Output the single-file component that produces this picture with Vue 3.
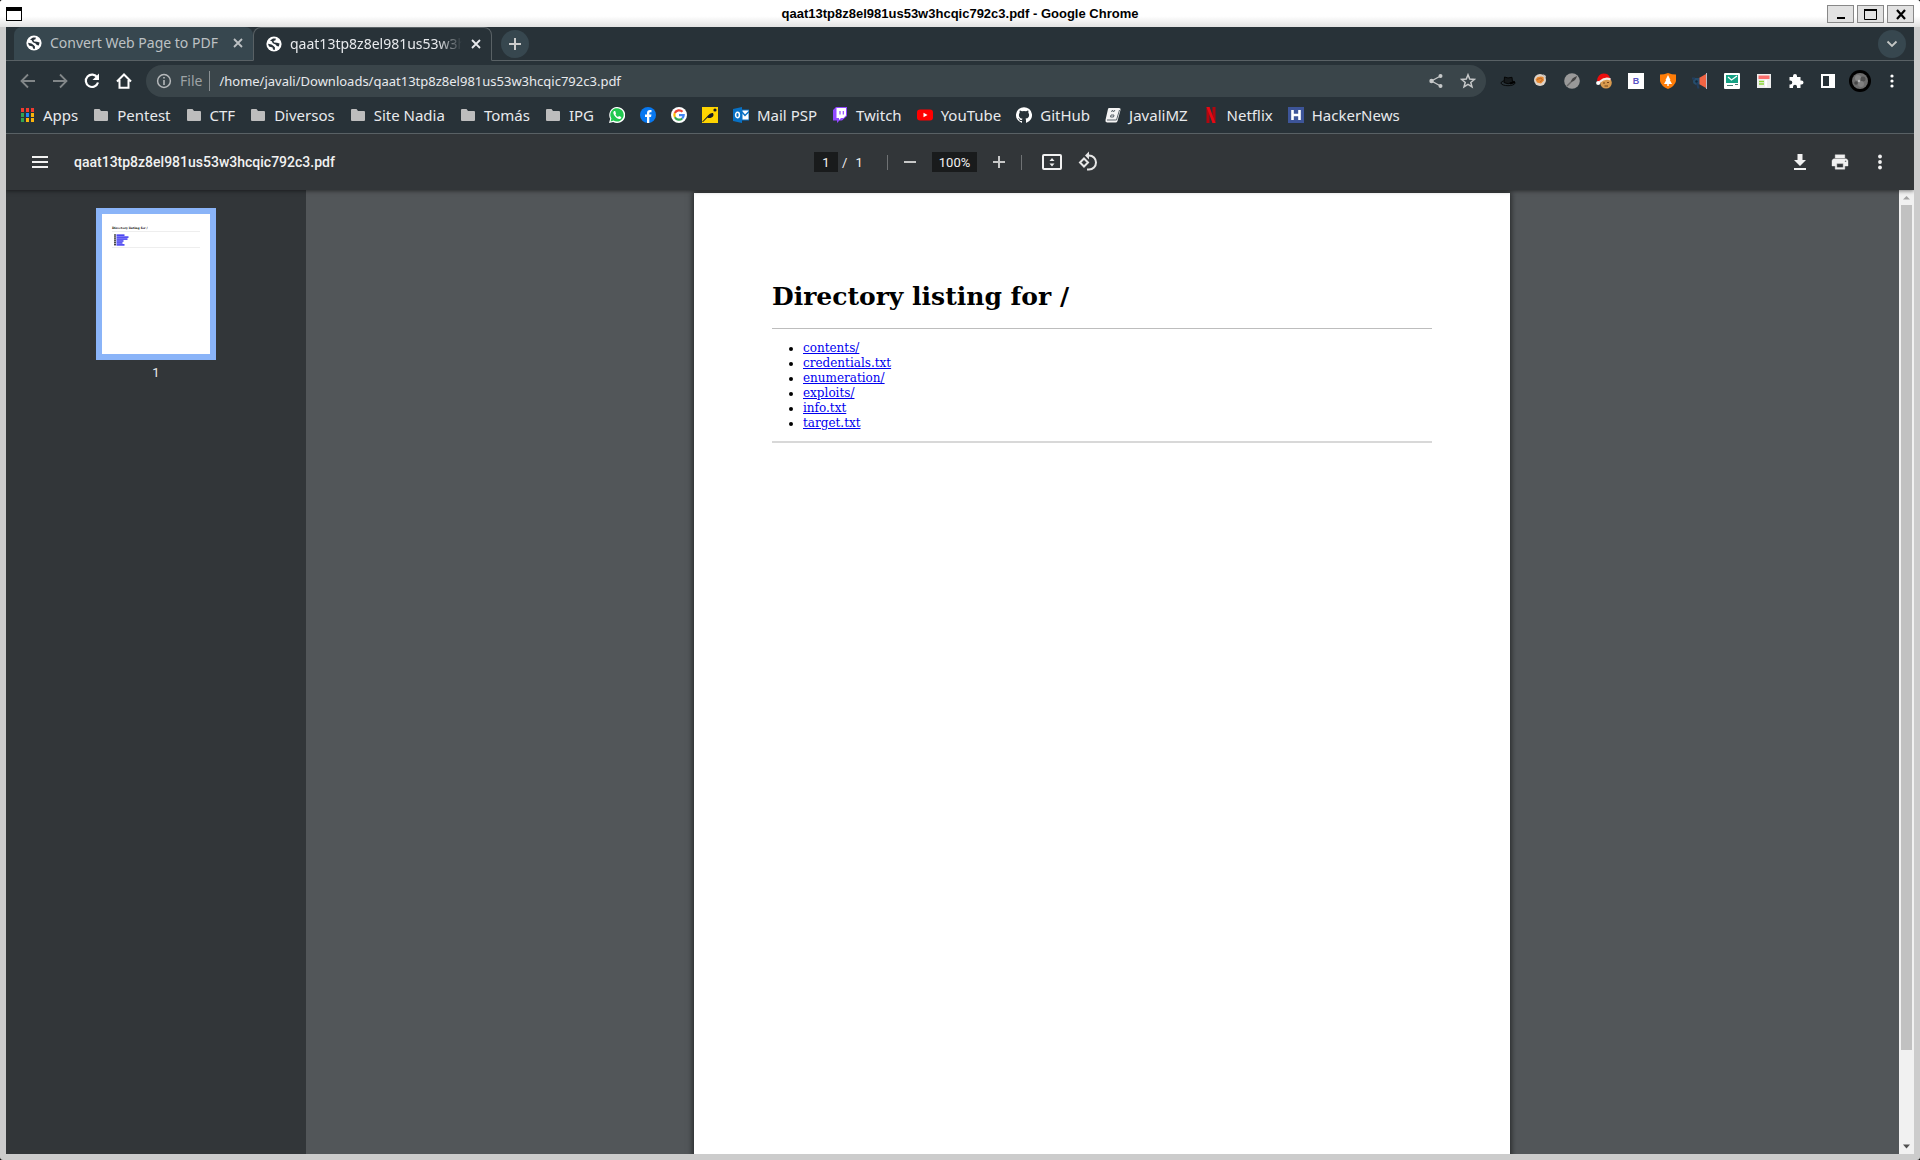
<script setup>
import { ref } from 'vue'

const fileName = 'qaat13tp8z8el981us53w3hcqic792c3.pdf'
const address = ref('/home/javali/Downloads/' + fileName)
const pageNumber = ref('1')
const zoomLevel = ref('100%')

const tabs = [
  { title: 'Convert Web Page to PDF', active: false },
  { title: fileName, active: true },
]

const bookmarks = [
  { icon: 'apps', label: 'Apps' },
  { icon: 'folder', label: 'Pentest' },
  { icon: 'folder', label: 'CTF' },
  { icon: 'folder', label: 'Diversos' },
  { icon: 'folder', label: 'Site Nadia' },
  { icon: 'folder', label: 'Tomás' },
  { icon: 'folder', label: 'IPG' },
  { icon: 'whatsapp', name: 'WhatsApp' },
  { icon: 'facebook', name: 'Facebook' },
  { icon: 'google', name: 'Google' },
  { icon: 'spoon', name: 'Recipes' },
  { icon: 'outlook', label: 'Mail PSP' },
  { icon: 'twitch', label: 'Twitch' },
  { icon: 'youtube', label: 'YouTube' },
  { icon: 'github', label: 'GitHub' },
  { icon: 'book', label: 'JavaliMZ' },
  { icon: 'netflix', label: 'Netflix' },
  { icon: 'hacker', label: 'HackerNews' },
]

const extensions = ['hat', 'fox', 'wrench', 'santa', 'letter', 'shield', 'megaphone', 'mail', 'notes', 'puzzle', 'panel']

const entries = ['contents/', 'credentials.txt', 'enumeration/', 'exploits/', 'info.txt', 'target.txt']
const thumbRows = [8, 12, 11, 7, 6, 8]
</script>

<template>
  <div class="window">
    <header class="titlebar">
      <svg class="app-icon" width="16" height="14" viewBox="0 0 16 14" aria-hidden="true">
        <path d="M0 0H16V14H0Z" fill="#000" /><path d="M1 4H15V13H1Z" fill="#fff" />
      </svg>
      <h1 class="window-title">{{ fileName }} - Google Chrome</h1>
      <div class="window-buttons">
        <button type="button" aria-label="Minimize"><svg width="14" height="12" viewBox="0 0 14 12"><path d="M3 10H11" stroke="#000" stroke-width="2" /></svg></button>
        <button type="button" aria-label="Maximize"><svg width="14" height="12" viewBox="0 0 14 12"><path d="M.5 1V11.500H12.500V1" stroke="#000" fill="none" /><path d="M0 2H13" stroke="#000" stroke-width="2" /></svg></button>
        <button type="button" aria-label="Close"><svg width="14" height="12" viewBox="0 0 14 12"><path d="M3 2L11 11M11 2L3 11" stroke="#000" stroke-width="2.200" /></svg></button>
      </div>
    </header>

    <div class="browser">
      <nav class="tabstrip" aria-label="Tabs">
        <div v-for="tab in tabs" :key="tab.title" class="tab" :class="{ active: tab.active }">
          <svg class="globe" width="16" height="16" viewBox="0 0 16 16" aria-hidden="true">
            <circle cx="8" cy="8" r="7.600" fill="#fff" />
            <path d="M4 4.500L7 2.600H9.800L9.500 4.200L7.500 5L8.200 6.600L11 6.800L13.600 7.500L12.800 10.500L10.800 10L9.600 8.400L6.800 7.200L5.800 5.200Z" fill="#28323a" />
            <path d="M2 7.800L5.500 8.600L7.600 10L9 11.600L8.800 14L7 13.400L6.600 11.600L3 10.600Z" fill="#28323a" />
          </svg>
          <span class="tab-title">{{ tab.title }}</span>
          <button type="button" class="tab-close" aria-label="Close tab">
            <svg width="16" height="16" viewBox="0 0 16 16"><path d="M4 4L12 12M12 4L4 12" stroke="currentColor" stroke-width="1.800" /></svg>
          </button>
        </div>
        <button type="button" class="round new-tab" aria-label="New tab">
          <svg width="16" height="16" viewBox="0 0 16 16"><path d="M8 2V14M2 8H14" stroke="#ccc" stroke-width="2" /></svg>
        </button>
        <span class="strip-fill"></span>
        <button type="button" class="round tab-search" aria-label="Search tabs">
          <svg width="16" height="16" viewBox="0 0 16 16"><path d="M3.500 5.500L8 10L12.500 5.500" stroke="#c4c7c5" stroke-width="1.800" fill="none" /></svg>
        </button>
      </nav>

      <div class="toolbar">
        <button type="button" class="tool" aria-label="Back"><svg width="16" height="16" viewBox="0 0 16 16"><path d="M15 8H2M8 1.500L1.500 8L8 14.500" stroke="#818688" stroke-width="1.800" fill="none" /></svg></button>
        <button type="button" class="tool" aria-label="Forward"><svg width="16" height="16" viewBox="0 0 16 16"><path d="M1 8H14M8 1.500L14.500 8L8 14.500" stroke="#818688" stroke-width="1.800" fill="none" /></svg></button>
        <button type="button" class="tool" aria-label="Reload"><svg width="16" height="16" viewBox="0 0 16 16"><path d="M13.300 4.500A6.200 6.200 0 1 0 14 9.500" stroke="#fff" stroke-width="2.200" fill="none" /><path d="M15 .5V7H8.500Z" fill="#fff" /></svg></button>
        <button type="button" class="tool" aria-label="Home"><svg width="16" height="16" viewBox="0 0 16 16"><path d="M1 8.500L8 1.500L15 8.500M3.500 7V14.800H12.500V7" stroke="#fff" stroke-width="2" fill="none" /></svg></button>
        <form class="omnibox" @submit.prevent>
          <svg width="16" height="16" viewBox="0 0 16 16" aria-hidden="true"><circle cx="8" cy="8" r="6.400" stroke="#b5b8ba" stroke-width="1.500" fill="none" /><path d="M8 4V5.600M8 7V12" stroke="#b5b8ba" stroke-width="1.600" /></svg>
          <label class="scheme" for="address">File</label>
          <input id="address" v-model="address" class="address" type="text" spellcheck="false">
          <button type="button" class="tool" aria-label="Share"><svg width="16" height="16" viewBox="0 0 16 16"><path d="M12.500 3L3.500 8L12.500 13" stroke="#c6c8c9" stroke-width="1.300" fill="none" /><g fill="#c6c8c9"><circle cx="12.500" cy="3" r="2" /><circle cx="3.500" cy="8" r="2.200" /><circle cx="12.500" cy="13" r="2" /></g></svg></button>
          <button type="button" class="tool" aria-label="Bookmark"><svg width="16" height="16" viewBox="0 0 16 16"><path d="M8 1.800L9.700 6.100L14.400 6.400L10.800 9.400L12 13.900L8 11.400L4 13.900L5.200 9.400L1.600 6.400L6.300 6.100Z" stroke="#c6c8c9" stroke-width="1.500" fill="none" /></svg></button>
        </form>
        <div class="extensions">
          <button v-for="name in extensions" :key="name" type="button" class="tool" :aria-label="name">
            <svg width="16" height="16" viewBox="0 0 16 16">
              <g v-if="name === 'hat'"><ellipse cx="8" cy="10" rx="7" ry="2.700" stroke="#080a0b" fill="none" /><path d="M4 9.500L4.500 4L8 5L12 4.300L12.500 9.500Q8 12 4 9.500Z" fill="#15191b" stroke="#050606" /><path d="M10 10.500L15 9" stroke="#000" stroke-width="2" /></g>
              <g v-else-if="name === 'fox'"><circle cx="8" cy="7" r="6" fill="#ded3c8" /><path d="M3.500 6.500L5.500 4L9 3.500L11.500 4L12 7.500L9 10.500L5 9.500Z" fill="#e98a32" /><path d="M5 6.500L9 5L10.500 7L8 9" stroke="#b8682a" fill="none" /><path d="M11 1L14 3L13 6" fill="#cfc9c4" /></g>
              <g v-else-if="name === 'wrench'"><circle cx="8" cy="8" r="7.800" fill="#999" /><path d="M3 13L8 8" stroke="#666" stroke-width="1.500" /><path d="M7 9Q7 5 13 3Q12 8 7 9Z" fill="#444" /></g>
              <g v-else-if="name === 'santa'"><circle cx="10" cy="9.800" r="5.800" fill="#d99a4e" /><path d="M1 8Q2-1 10 .8Q14 2 14.500 7L8 5L3 9Z" fill="#ec0d0d" /><path d="M3.500 9Q9 4 14.500 6.500" stroke="#f4ebe4" stroke-width="2.200" fill="none" /><circle cx="2.200" cy="10" r="2.100" fill="#fff" /><path d="M7 10H9M11 9.500H13M8.500 13H12" stroke="#754417" /></g>
              <g v-else-if="name === 'letter'"><path d="M0 0H16V16H0Z" fill="#fff" /><text x="8" y="11" text-anchor="middle" font-family="Liberation Sans, sans-serif" font-size="9" font-weight="bold" fill="#5a54c4">B</text></g>
              <g v-else-if="name === 'shield'"><path d="M0 1.500Q4 1.500 8 0Q12 1.500 16 1.500V8Q15 13 8 16Q1 13 0 8Z" fill="#ff7d08" /><path d="M8 2L10.500 7H9.800L12 11H4L6.200 7H5.500Z" fill="#fff" /><path d="M8 10V13" stroke="#fff" stroke-width="1.500" /></g>
              <g v-else-if="name === 'megaphone'"><path d="M7 5L14 1V15L7 11Z" fill="#f26443" /><path d="M14.500 0V16" stroke="#bdb9c5" /><path d="M3 5H7.500V11.500H3Z" fill="#264d6c" /><circle cx="4" cy="8.500" r="3" fill="#264d6c" /><path d="M0 5.500H3M5 10L6.500 15.500" stroke="#223e5e" stroke-width="2" /><circle cx="4.500" cy="8.500" r="1.200" fill="#142737" /></g>
              <g v-else-if="name === 'mail'"><rect width="16" height="16" rx="1" fill="#fff" /><path d="M2 2H14V10H2Z" fill="#15a184" /><path d="M4 4L7.500 7L13 3" stroke="#fff" stroke-width="1.300" fill="none" /><path d="M3 12.500H9M11 11.500H14" stroke="#467871" /></g>
              <g v-else-if="name === 'notes'"><path d="M1 1H15V15H1Z" fill="#eee" /><path d="M2.500 2.500H13.500V6H2.500Z" fill="#fb6f6d" /><path d="M3 8.500H8M3 11H8" stroke="#8bd537" stroke-width="1.500" /><path d="M10 7V14" stroke="#fff" stroke-width="2" /></g>
              <path v-else-if="name === 'puzzle'" d="M1.500 4H5V3A2 2 0 0 1 9 3V4H12.500V7.500H13.500A2 2 0 0 1 13.500 11.500H12.500V15H9V13.800A2 2 0 0 0 5 13.800V15H1.500V11.500H2.300A2 2 0 0 0 2.300 7.500H1.500Z" fill="#fff" />
              <path v-else d="M1 1H15V15H1ZM3 3V13H9V3Z" fill="#fff" fill-rule="evenodd" />
            </svg>
          </button>
          <button type="button" class="tool" aria-label="Profile"><span class="avatar"><svg width="16" height="16" viewBox="0 0 16 16"><circle cx="8" cy="8" r="8" fill="#6d6d6d" /><circle cx="6" cy="5" r="3" fill="#858585" /><circle cx="11" cy="6" r="2.500" fill="#4f4f4f" /><circle cx="9" cy="11" r="3" fill="#808080" /><circle cx="7" cy="8" r="1.200" fill="#bbb" /><circle cx="4" cy="10" r="1.800" fill="#474747" /></svg></span></button>
          <button type="button" class="tool" aria-label="Menu"><svg width="16" height="16" viewBox="0 0 16 16" fill="#fff"><circle cx="8" cy="3" r="1.600" /><circle cx="8" cy="8" r="1.600" /><circle cx="8" cy="13" r="1.600" /></svg></button>
        </div>
      </div>

      <nav class="bookmarks" aria-label="Bookmarks">
        <a v-for="mark in bookmarks" :key="mark.label || mark.name" href="#" :aria-label="mark.label || mark.name">
          <svg width="16" height="16" viewBox="0 0 16 16" aria-hidden="true">
            <g v-if="mark.icon === 'apps'">
              <path d="M2 1H5V5H2ZM7 1H10V5H7ZM12 1H15V5H12Z" fill="#f23b30" />
              <path d="M2 6H5V10H2ZM2 11H5V15H2Z" fill="#31a350" /><path d="M7 6H10V10H7Z" fill="#1e88f5" />
              <path d="M12 6H15V10H12ZM7 11H10V15H7ZM12 11H15V15H12Z" fill="#fbb40b" />
            </g>
            <path v-else-if="mark.icon === 'folder'" d="M2 2H6.500L8 4H14Q15 4 15 5V13Q15 14 14 14H2Q1 14 1 13V3Q1 2 2 2Z" fill="#bdbdbd" />
            <g v-else-if="mark.icon === 'whatsapp'"><path d="M0 16L1.200 11.800A8 8 0 1 1 4.200 14.900Z" fill="#fff" /><path d="M1.600 14.400L2.400 11.500A6.700 6.700 0 1 1 4.600 13.600Z" fill="#21c84f" /><path d="M5 4Q3.500 5.500 5 8Q8 12.500 11 12Q12.500 11.500 12.300 10L10 9L9 10Q7.500 9.500 6.500 7.500L7 6.500L6.200 4Z" fill="#fff" /></g>
            <g v-else-if="mark.icon === 'facebook'"><circle cx="8" cy="8" r="8" fill="#0878f0" /><path d="M7 16V10H5V7.500H7V6Q7 3 10 3H11.500V5.300H10.300Q9.300 5.300 9.300 6.300V7.500H11.500L11 10H9.300V16Z" fill="#fff" /></g>
            <g v-else-if="mark.icon === 'google'" fill="none" stroke-width="2.200"><circle cx="8" cy="8" r="8" fill="#fff" /><path d="M11.500 4.800A4.700 4.700 0 0 0 3.800 6" stroke="#ea4335" /><path d="M3.800 6A4.700 4.700 0 0 0 3.900 10.200" stroke="#fbbc05" /><path d="M3.900 10.200A4.700 4.700 0 0 0 11.200 11.500" stroke="#34a853" /><path d="M11.200 11.500A4.700 4.700 0 0 0 12.700 8.100H8" stroke="#4285f4" /></g>
            <g v-else-if="mark.icon === 'spoon'"><path d="M0 0H16V16H0Z" fill="#ffd400" /><path d="M0 15L6 8.500Q8 5.500 11 6Q12.500 9 9.500 10.500Q7 11.500 5.500 10.500L1 15Z" fill="#151a25" /><circle cx="13" cy="3" r="1.600" fill="#151a25" /></g>
            <g v-else-if="mark.icon === 'outlook'"><path d="M9 3H16V13H9Z" fill="#fff" stroke="#0871c5" /><path d="M9 5L12 8.500L16 4.500" stroke="#0871c5" stroke-width="1.500" fill="none" /><path d="M0 2L9 0V16L0 14Z" fill="#0871c5" /><ellipse cx="4.500" cy="8" rx="1.900" ry="2.700" stroke="#fff" stroke-width="1.500" fill="none" /></g>
            <g v-else-if="mark.icon === 'twitch'"><path d="M4 0H15V9L10 13.500H7.500L5 16V13.500H1V3Z" fill="#9147ff" /><path d="M4.500 1H14V8.500L11.500 11H9L7 13V11H4.500Z" fill="#fff" /><path d="M8 4V7.500M11.300 4V7.500" stroke="#9147ff" stroke-width="1.200" /></g>
            <g v-else-if="mark.icon === 'youtube'"><rect x="0" y="2.500" width="16" height="11" rx="3" fill="#f00" /><path d="M6.500 5.700L10.500 8L6.500 10.300Z" fill="#fff" /></g>
            <path v-else-if="mark.icon === 'github'" d="M8 .2A8 8 0 0 0 5.470 15.790C5.870 15.860 6.020 15.620 6.020 15.410L6.010 13.920C3.780 14.400 3.310 12.970 3.310 12.970C2.950 12.050 2.420 11.800 2.420 11.800C1.690 11.300 2.480 11.310 2.480 11.310C3.290 11.370 3.710 12.140 3.710 12.140C4.430 13.370 5.590 13.010 6.040 12.810C6.110 12.290 6.320 11.930 6.550 11.730C4.780 11.530 2.910 10.840 2.910 7.780C2.910 6.900 3.220 6.190 3.730 5.630C3.650 5.430 3.370 4.610 3.810 3.510C3.810 3.510 4.480 3.300 6.010 4.330A7.600 7.600 0 0 1 10.010 4.330C11.540 3.300 12.210 3.510 12.210 3.510C12.650 4.610 12.370 5.430 12.290 5.630C12.800 6.190 13.110 6.900 13.110 7.780C13.110 10.850 11.240 11.530 9.460 11.730C9.750 11.980 10.010 12.470 10.010 13.210L10 15.410C10 15.620 10.150 15.870 10.550 15.790A8 8 0 0 0 8 .2Z" fill="#fff" />
            <g v-else-if="mark.icon === 'book'"><path d="M4 1H14Q16 1 15.500 3L12.500 14Q12 15.500 10.500 15.500H2Q0 15 .5 13L3 2Q3.300 1 4 1Z" fill="#f4f4f4" /><path d="M2 13H11.500L14.500 3" stroke="#59636a" fill="none" /><path d="M6.500 5L7.500 3L8.500 5L10 3M6 8H9L8.500 10H5.500Z" stroke="#59636a" fill="none" /></g>
            <g v-else-if="mark.icon === 'netflix'"><path d="M3.500 0H6.500V16H3.500ZM9.500 0H12.500V16H9.500Z" fill="#b1060f" /><path d="M3.500 0H6.500L12.500 16H9.500Z" fill="#e50914" /></g>
            <g v-else><path d="M0 0H16V16H0Z" fill="#3d5599" /><path d="M4.500 3V13M11.500 3V13M4.500 8H11.500" stroke="#fff" stroke-width="2.600" /></g>
          </svg>
          <span v-if="mark.label">{{ mark.label }}</span>
        </a>
      </nav>

      <section class="viewer">
        <div class="pdf-bar">
          <div class="bar-left">
            <button type="button" class="pdf-btn" aria-label="Menu"><svg width="24" height="24" viewBox="0 0 24 24"><path d="M4 7H20M4 12H20M4 17H20" stroke="#f1f1f1" stroke-width="2" /></svg></button>
            <span class="pdf-name">{{ fileName }}</span>
          </div>
          <div class="bar-center">
            <input v-model="pageNumber" class="page-input" type="text" aria-label="Page number">
            <span class="page-total"><span>/</span><span>1</span></span>
            <div class="zoom-group">
              <button type="button" class="pdf-btn" aria-label="Zoom out"><svg width="24" height="24" viewBox="0 0 24 24"><path d="M6 12H18" stroke="#c7c8c8" stroke-width="2" /></svg></button>
              <input v-model="zoomLevel" class="zoom-input" type="text" aria-label="Zoom level">
              <button type="button" class="pdf-btn" aria-label="Zoom in"><svg width="24" height="24" viewBox="0 0 24 24"><path d="M6 12H18M12 6V18" stroke="#c7c8c8" stroke-width="2" /></svg></button>
            </div>
            <div class="view-group">
              <button type="button" class="pdf-btn" aria-label="Fit to page"><svg width="24" height="24" viewBox="0 0 24 24"><rect x="3" y="5" width="18" height="14" rx="1" stroke="#f1f1f1" stroke-width="2" fill="none" /><path d="M9.500 11L12 8L14.500 11ZM9.500 13.500L12 16.500L14.500 13.500Z" fill="#f1f1f1" /></svg></button>
              <button type="button" class="pdf-btn" aria-label="Rotate"><svg width="24" height="24" viewBox="0 0 24 24"><path d="M8 8.500L12 12.500L8 16.500L4 12.500Z" stroke="#e6e6e6" stroke-width="2" fill="none" /><path d="M11 5.500H13A7 7 0 0 1 13 19.500H11" stroke="#e6e6e6" stroke-width="2" fill="none" /><path d="M13 1.500V9.500L9 5.500Z" fill="#e6e6e6" /></svg></button>
            </div>
          </div>
          <div class="bar-right">
            <button type="button" class="pdf-btn" aria-label="Download"><svg width="24" height="24" viewBox="0 0 24 24"><path d="M18 10H14.500V4H9.500V10H6L12 16ZM6 18V20H18V18Z" fill="#f1f1f1" /></svg></button>
            <button type="button" class="pdf-btn" aria-label="Print"><svg width="24" height="24" viewBox="0 0 24 24"><path d="M19 8H5C3.300 8 2 9.300 2 11V17H6V21H18V17H22V11C22 9.300 20.700 8 19 8ZM16 19H8V14H16ZM19 12A1 1 0 1 1 19 10A1 1 0 0 1 19 12ZM18 3H6V7H18Z" transform="translate(2.400 2.400) scale(.8)" fill="#f1f1f1" stroke="#f1f1f1" stroke-width=".5" /></svg></button>
            <button type="button" class="pdf-btn" aria-label="More actions"><svg width="24" height="24" viewBox="0 0 24 24" fill="#f1f1f1"><circle cx="12" cy="6.500" r="1.900" /><circle cx="12" cy="12" r="1.900" /><circle cx="12" cy="17.500" r="1.900" /></svg></button>
          </div>
        </div>

        <div class="pdf-body">
          <aside class="sidebar">
            <button type="button" class="thumb" aria-label="Page 1">
              <svg width="108" height="140" viewBox="0 0 108 140">
                <text x="10" y="15" font-family="DejaVu Serif, serif" font-weight="bold" font-size="3" fill="#000">Directory listing for /</text>
                <path d="M10 17.500H98M10 33.500H98" stroke="#eee" />
                <g v-for="(width, i) in thumbRows" :key="i">
                  <rect x="12" :y="20.400 + i * 1.950" width="2" height="1.200" fill="#222" />
                  <rect x="14.500" :y="20.400 + i * 1.950" :width="width" height="1.500" fill="#3a34f0" />
                </g>
              </svg>
            </button>
            <span class="thumb-label">1</span>
          </aside>
          <main class="canvas">
            <article class="sheet">
              <h2>Directory listing for /</h2>
              <hr>
              <ul>
                <li v-for="entry in entries" :key="entry"><a href="#">{{ entry }}</a></li>
              </ul>
              <hr class="end">
            </article>
          </main>
          <div class="scrollbar" aria-hidden="true">
            <svg width="15" height="15" viewBox="0 0 15 15"><path d="M4 9.500L7.500 6L11 9.500Z" fill="#a3a3a3" /></svg>
            <span class="scroll-thumb"></span>
            <svg width="15" height="15" viewBox="0 0 15 15"><path d="M4 5.500L7.500 9.500L11 5.500Z" fill="#505050" /></svg>
          </div>
        </div>
      </section>
    </div>
  </div>
</template>

<style>
body { margin: 0; background: #000; }
</style>

<style scoped>
* { box-sizing: border-box; }
button, input { border: 0; padding: 0; margin: 0; background: none; font: inherit; color: inherit; outline: 0; }
button { display: flex; align-items: center; justify-content: center; flex: none; }
svg { display: block; flex: none; }

.window {
  display: flex;
  flex-direction: column;
  height: 100vh;
  overflow: hidden;
  border-radius: 3px;
  background: #ccc;
  font-family: "Noto Sans", sans-serif;
  font-size: 15px;
  color: #e8eaed;
}

.titlebar {
  display: flex;
  align-items: center;
  flex: none;
  height: 27px;
  padding: 0 6px;
  background: linear-gradient(#fff 60%, #e2e2e2);
}
.app-icon { margin-right: 71px; }
.window-title {
  flex: 1;
  margin: 0;
  text-align: center;
  font: bold 13px/20px "Liberation Sans", Arial, sans-serif;
  color: #000;
}
.window-buttons { display: flex; gap: 3px; }
.window-buttons button { width: 27px; height: 18px; border: 1px solid #888; background: #e2e2e2; }

.browser { display: flex; flex-direction: column; flex: 1; min-height: 0; margin: 0 6px 6px; background: #283238; }

.tabstrip { display: flex; flex: none; align-items: center; height: 34px; padding: 0 8px; box-shadow: inset 0 -1px #596165; }
.tab {
  display: flex;
  align-items: center;
  width: 239px;
  height: 34px;
  padding: 0 7px 1px 12px;
  border-radius: 8px 8px 0 0;
  border-bottom: 1px solid #596165;
  background: #37474f;
  color: #bdc1c4;
  font-size: 14px;
}
.tab.active { border: 1px solid #596165; border-bottom-color: #283238; background: #283238; color: #e8eaed; }
.globe { margin-right: 8px; }
.tab-title { flex: 1; overflow: hidden; white-space: nowrap; line-height: 24px; }
.tab.active .tab-title { mask-image: linear-gradient(to right, #000 86%, transparent); }
.tab-close { width: 16px; height: 16px; margin-left: 6px; }
.round { width: 28px; height: 28px; border-radius: 50%; background: #37474f; }
.new-tab { margin-left: 9px; }
.strip-fill { flex: 1; }

.toolbar { display: flex; flex: none; align-items: center; height: 40px; padding: 0 6px; }
.tool { width: 32px; height: 32px; }
.omnibox { display: flex; flex: 1; align-items: center; height: 32px; margin-left: 6px; padding: 0 2px 0 10px; border-radius: 16px; background: #3a454a; }
.scheme { margin-left: 8px; padding-right: 7px; border-right: 1px solid #8a9093; font-size: 14px; line-height: 20px; color: #9ea3a5; }
.address { flex: 1; min-width: 0; height: 28px; margin-left: 9px; font-size: 13px; }
.extensions { display: flex; margin-left: 6px; }
.avatar { display: flex; align-items: center; justify-content: center; width: 22px; height: 22px; border-radius: 50%; background: #000; }

.bookmarks { display: flex; flex: none; align-items: center; gap: 15px; height: 33px; padding: 0 13px 5px; border-bottom: 1px solid #596165; }
.bookmarks a { display: flex; align-items: center; gap: 8px; line-height: 24px; color: inherit; text-decoration: none; white-space: nowrap; }

.viewer { display: flex; flex-direction: column; flex: 1; min-height: 0; overflow: hidden; font-family: Roboto, sans-serif; }
.pdf-bar { position: relative; z-index: 1; display: flex; flex: none; align-items: center; height: 56px; padding: 0 16px; background: #323639; color: #f1f1f1; box-shadow: 0 1px 4px rgba(0, 0, 0, .5); }
.bar-left, .bar-right { display: flex; flex: 1; align-items: center; }
.bar-right { justify-content: flex-end; gap: 4px; }
.bar-center { display: flex; align-items: center; font-size: 13px; }
.pdf-btn { width: 36px; height: 36px; }
.pdf-name { margin-left: 16px; font-size: 14px; font-weight: 500; line-height: 20px; }
.page-input { width: 24px; height: 20px; background: #191b1c; text-align: center; }
.page-total { display: flex; gap: 8px; width: 49px; padding-left: 4px; }
.zoom-group, .view-group { display: flex; align-items: center; }
.zoom-group::before, .view-group::before { content: ""; width: 1px; height: 15px; background: #6f7274; }
.zoom-group::before { margin-right: 4px; }
.view-group::before { margin: 0 12px 0 4px; }
.zoom-input { width: 45px; height: 20px; margin: 0 4px; background: #191b1c; text-align: center; }

.pdf-body { display: flex; flex: 1; min-height: 0; background: #525659; }
.sidebar { display: flex; flex-direction: column; align-items: center; flex: none; width: 300px; padding-top: 18px; background: #323639; }
.thumb { border: 6px solid #8ab4f8; background: #fff; }
.thumb-label { margin-top: 5px; font-size: 13px; line-height: 16px; }
.canvas { flex: 1; min-width: 0; padding: 3px 1px 0 0; overflow: hidden; }
.sheet {
  width: 816px;
  min-height: 1056px;
  margin: 0 auto;
  padding: 88px 78px;
  background: #fff;
  color: #000;
  font: 12px/15px "DejaVu Serif", serif;
  box-shadow: 0 0 6px 1px rgba(0, 0, 0, .6);
}
.sheet h2 { margin: 0 0 15px; font-size: 25px; line-height: 32px; }
.sheet hr { margin: 0; border: 0; height: 1px; background: #bdbdbd; }
.sheet hr.end { height: 2px; background: #d8d8d8; }
.sheet ul { margin: 12px 0 10px; padding-left: 31px; }
.sheet a { color: #00e; text-decoration: underline; }

.scrollbar { display: flex; flex-direction: column; flex: none; width: 15px; background: #f1f1f1; }
.scroll-thumb { flex: 1; margin: 0 2px 89px; background: #c1c1c1; }
</style>
